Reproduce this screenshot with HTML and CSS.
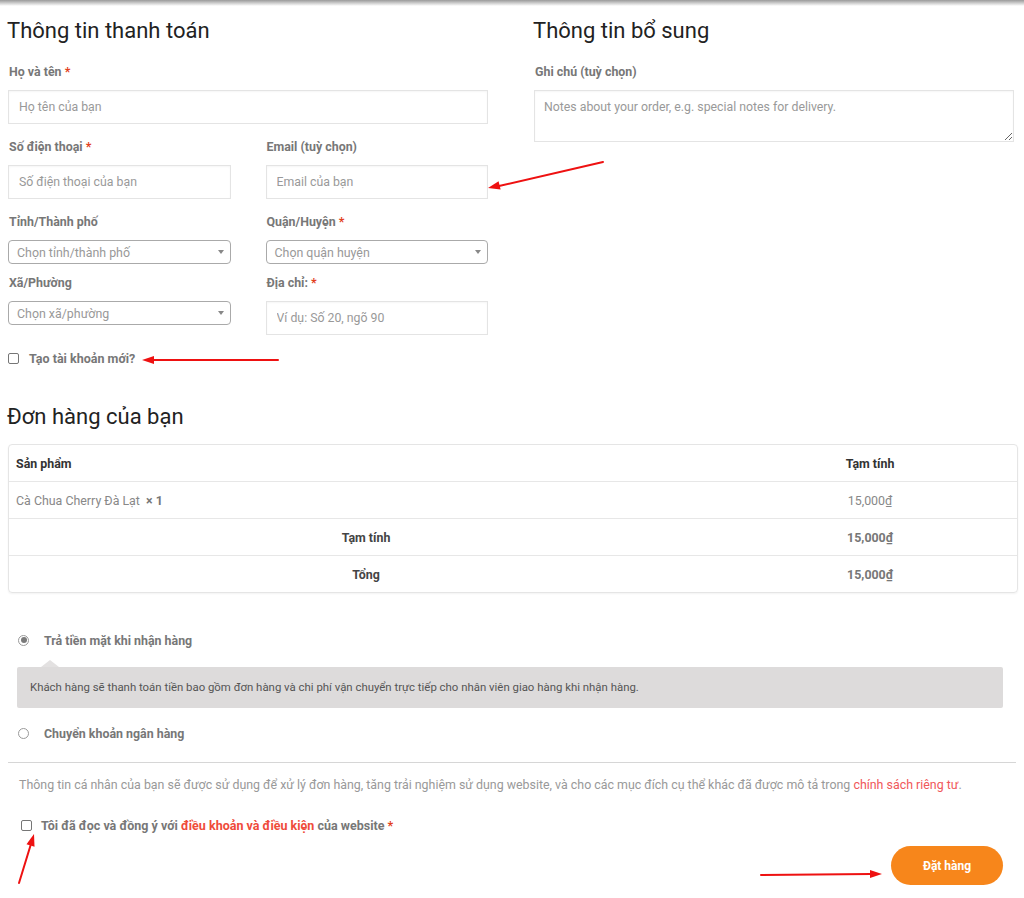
FILE: index.html
```html
<!DOCTYPE html>
<html lang="vi">
<head>
<meta charset="utf-8">
<title>Thanh toán</title>
<link rel="stylesheet" href="styles.css">
</head>
<body>
<div class="topshadow"></div>
<main class="checkout">
  <div class="cols">
    <section class="billing">
      <h3 class="section-title">Thông tin thanh toán</h3>
      <div class="form-grid">
        <div class="field full">
          <label class="field-label">Họ và tên <span class="req">*</span></label>
          <input class="text-input" type="text" placeholder="Họ tên của bạn">
        </div>
        <div class="field">
          <label class="field-label">Số điện thoại <span class="req">*</span></label>
          <input class="text-input" type="text" placeholder="Số điện thoại của bạn">
        </div>
        <div class="field">
          <label class="field-label">Email (tuỳ chọn)</label>
          <input class="text-input" type="text" placeholder="Email của bạn">
        </div>
        <div class="field select-field">
          <label class="field-label">Tỉnh/Thành phố</label>
          <div class="select"><span>Chọn tỉnh/thành phố</span><i class="caret"></i></div>
        </div>
        <div class="field select-field">
          <label class="field-label">Quận/Huyện <span class="req">*</span></label>
          <div class="select"><span>Chọn quận huyện</span><i class="caret"></i></div>
        </div>
        <div class="field select-field">
          <label class="field-label">Xã/Phường</label>
          <div class="select"><span>Chọn xã/phường</span><i class="caret"></i></div>
        </div>
        <div class="field">
          <label class="field-label">Địa chỉ: <span class="req">*</span></label>
          <input class="text-input" type="text" placeholder="Ví dụ: Số 20, ngõ 90">
        </div>
      </div>
      <div class="check-row create-account"><span class="checkbox"></span>Tạo tài khoản mới?</div>
    </section>
    <section class="additional">
      <h3 class="section-title">Thông tin bổ sung</h3>
      <div class="field">
        <label class="field-label">Ghi chú (tuỳ chọn)</label>
        <textarea class="text-area" placeholder="Notes about your order, e.g. special notes for delivery."></textarea>
      </div>
    </section>
  </div>

  <h3 class="section-title order-title">Đơn hàng của bạn</h3>
  <table class="order-table">
    <colgroup><col class="c1"><col class="c2"></colgroup>
    <thead>
      <tr><th class="product-name">Sản phẩm</th><th class="product-total">Tạm tính</th></tr>
    </thead>
    <tbody>
      <tr><td class="product-name item">Cà Chua Cherry Đà Lạt&nbsp; <strong class="qty">× 1</strong></td><td class="product-total price">15,000₫</td></tr>
    </tbody>
    <tfoot>
      <tr><th class="sum-label">Tạm tính</th><td class="product-total sum">15,000₫</td></tr>
      <tr class="last"><th class="sum-label">Tổng</th><td class="product-total sum">15,000₫</td></tr>
    </tfoot>
  </table>

  <div class="payment">
    <div class="method">
      <div class="method-label"><span class="radio checked"></span>Trả tiền mặt khi nhận hàng</div>
      <div class="payment-box">Khách hàng sẽ thanh toán tiền bao gồm đơn hàng và chi phí vận chuyển trực tiếp cho nhân viên giao hàng khi nhận hàng.</div>
    </div>
    <div class="method second">
      <div class="method-label"><span class="radio"></span>Chuyển khoản ngân hàng</div>
    </div>
  </div>

  <div class="place-order">
    <p class="privacy">Thông tin cá nhân của bạn sẽ được sử dụng để xử lý đơn hàng, tăng trải nghiệm sử dụng website, và cho các mục đích cụ thể khác đã được mô tả trong <a class="privacy-link" href="#">chính sách riêng tư</a>.</p>
    <div class="check-row terms"><span class="checkbox"></span>Tôi đã đọc và đồng ý với&nbsp;<a class="terms-link" href="#">điều khoản và điều kiện</a>&nbsp;của website&nbsp;<span class="req">*</span></div>
    <div class="btn-row"><button class="btn-order" type="button">Đặt hàng</button></div>
  </div>
</main>

<svg class="annotations" width="1024" height="898" viewBox="0 0 1024 898" aria-hidden="true">
  <g stroke="#ee1111" stroke-width="2" fill="none" stroke-linecap="round">
    <line x1="603" y1="162" x2="499" y2="186"/>
    <line x1="278" y1="360" x2="152" y2="360"/>
    <line x1="19" y1="883" x2="30.5" y2="845.5"/>
    <line x1="761" y1="875" x2="871" y2="874"/>
  </g>
  <g fill="#ee1111">
    <polygon points="488,188 500.6,189.6 498.6,181.2"/>
    <polygon points="142,360 154,356 154,364"/>
    <polygon points="34,834 34.5,846.8 26.5,844.2"/>
    <polygon points="882,874 870,870 870,878"/>
  </g>
</svg>
</body>
</html>
```
FILE: styles.css
```css
* { box-sizing: border-box; }

html, body {
  margin: 0;
  padding: 0;
  background: #fff;
}

body {
  position: relative;
  font-family: Roboto, "Noto Sans", "Liberation Sans", sans-serif;
  font-size: 12.4px;
  color: #777;
}

.topshadow {
  height: 6px;
  background: linear-gradient(to bottom, #9a9a9a, rgba(255, 255, 255, 0));
}

.checkout {
  padding: 0 8px;
}

.cols {
  display: grid;
  grid-template-columns: 480px 480px;
  column-gap: 46px;
}

.section-title {
  margin: 12px 0 18px -1px;
  font-size: 22px;
  line-height: 26px;
  font-weight: 400;
  color: #222;
}

.form-grid {
  display: grid;
  grid-template-columns: 1fr 1fr;
  column-gap: 35px;
}

.field {
  margin-bottom: 13px;
}

.field.full {
  grid-column: 1 / -1;
}

.select-field {
  margin-bottom: 9px;
}

.field-label {
  display: block;
  font-weight: 700;
  line-height: 20px;
  margin: 0 0 8px 1px;
  color: #777;
}

.req {
  color: #e2401c;
}

.text-input,
.text-area {
  display: block;
  width: 100%;
  border: 1px solid #e4e4e4;
  box-shadow: inset 0 1px 2px rgba(0, 0, 0, 0.04);
  background: #fff;
  font-family: Roboto, "Noto Sans", "Liberation Sans", sans-serif;
  font-size: 12.3px;
  color: #555;
  outline: none;
}

.text-input {
  height: 34px;
  padding: 0 10px;
}

.text-area {
  height: 52px;
  padding: 9px 9px;
  line-height: 14px;
  resize: vertical;
}

.text-input::placeholder,
.text-area::placeholder {
  color: #999;
}

.select {
  display: flex;
  align-items: center;
  justify-content: space-between;
  height: 24px;
  border: 1px solid #aaa;
  border-radius: 4px;
  padding: 0 6px 0 8px;
  color: #999;
  background: #fff;
}

.caret {
  width: 0;
  height: 0;
  border-left: 3.5px solid transparent;
  border-right: 3.5px solid transparent;
  border-top: 4px solid #888;
}

.check-row {
  display: flex;
  align-items: center;
  height: 20px;
  font-weight: 700;
  color: #777;
}

.checkbox {
  flex: none;
  width: 11px;
  height: 11px;
  border: 1px solid #767676;
  border-radius: 2px;
  background: #fff;
}

.create-account {
  font-size: 12.5px;
}

.create-account .checkbox {
  margin-right: 10px;
}

.order-title {
  margin-top: 36px;
  margin-bottom: 14px;
}

.order-table {
  width: 100%;
  table-layout: fixed;
  border: 1px solid #e5e5e5;
  border-radius: 4px;
  border-collapse: separate;
  border-spacing: 0;
  box-shadow: 0 1px 2px rgba(0, 0, 0, 0.05);
}

.order-table .c1 { width: 714px; }
.order-table .c2 { width: 294px; }

.order-table th,
.order-table td {
  height: 37px;
  padding: 0 7px;
  border-bottom: 1px solid #e7e7e7;
  font-size: 12.4px;
  vertical-align: middle;
}

.order-table tr.last th,
.order-table tr.last td {
  border-bottom: 0;
  height: 36px;
}

.order-table thead th {
  font-weight: 700;
  color: #333;
}

.order-table th.product-name {
  text-align: left;
}

.order-table .product-total {
  text-align: center;
}

.order-table .item {
  color: #888;
}

.order-table .qty {
  color: #777;
}

.order-table .price {
  color: #888;
}

.order-table .sum-label {
  text-align: center;
  font-weight: 700;
  color: #444;
}

.order-table .sum {
  font-weight: 700;
  color: #777;
}

.payment {
  margin-top: 37px;
}

.method-label {
  display: flex;
  align-items: center;
  height: 20px;
  padding-left: 10px;
  font-weight: 700;
  color: #777;
}

.radio {
  flex: none;
  position: relative;
  width: 11px;
  height: 11px;
  border: 1px solid #9a9a9a;
  border-radius: 50%;
  margin-right: 15px;
  background: #fff;
}

.radio.checked::after {
  content: "";
  position: absolute;
  left: 1.5px;
  top: 1.5px;
  width: 6px;
  height: 6px;
  border-radius: 50%;
  background: #7a7a7a;
}

.payment-box {
  position: relative;
  margin: 17px 13px 0 9px;
  height: 41px;
  padding: 0 13px;
  line-height: 41px;
  background: #dddbdb;
  border-radius: 2px;
  font-size: 11.4px;
  color: #555;
}

.payment-box::before {
  content: "";
  position: absolute;
  left: 24px;
  top: -7px;
  border-left: 9px solid transparent;
  border-right: 9px solid transparent;
  border-bottom: 7px solid #e3e1e1;
}

.method.second {
  margin-top: 15px;
}

.place-order {
  margin-top: 19px;
  border-top: 1px solid #d6d6d6;
  padding-top: 12px;
}

.privacy {
  margin: 0;
  padding-left: 11px;
  line-height: 20px;
  font-size: 12.4px;
  color: #999;
}

.privacy-link {
  color: #f0585a;
  text-decoration: none;
}

.terms {
  margin-top: 20px;
  padding-left: 13px;
  font-size: 12.5px;
}

.terms .checkbox {
  margin-right: 9px;
}

.terms-link {
  color: #ef4b3a;
  text-decoration: none;
}

.btn-row {
  display: flex;
  justify-content: flex-end;
  margin-top: 11px;
  padding-right: 13px;
}

.btn-order {
  width: 112px;
  height: 39px;
  border: 0;
  border-radius: 20px;
  background: #f7861b;
  color: #fff;
  font-family: Roboto, "Noto Sans", "Liberation Sans", sans-serif;
  font-size: 12px;
  font-weight: 700;
}

.annotations {
  position: absolute;
  top: 0;
  left: 0;
  pointer-events: none;
}
```
